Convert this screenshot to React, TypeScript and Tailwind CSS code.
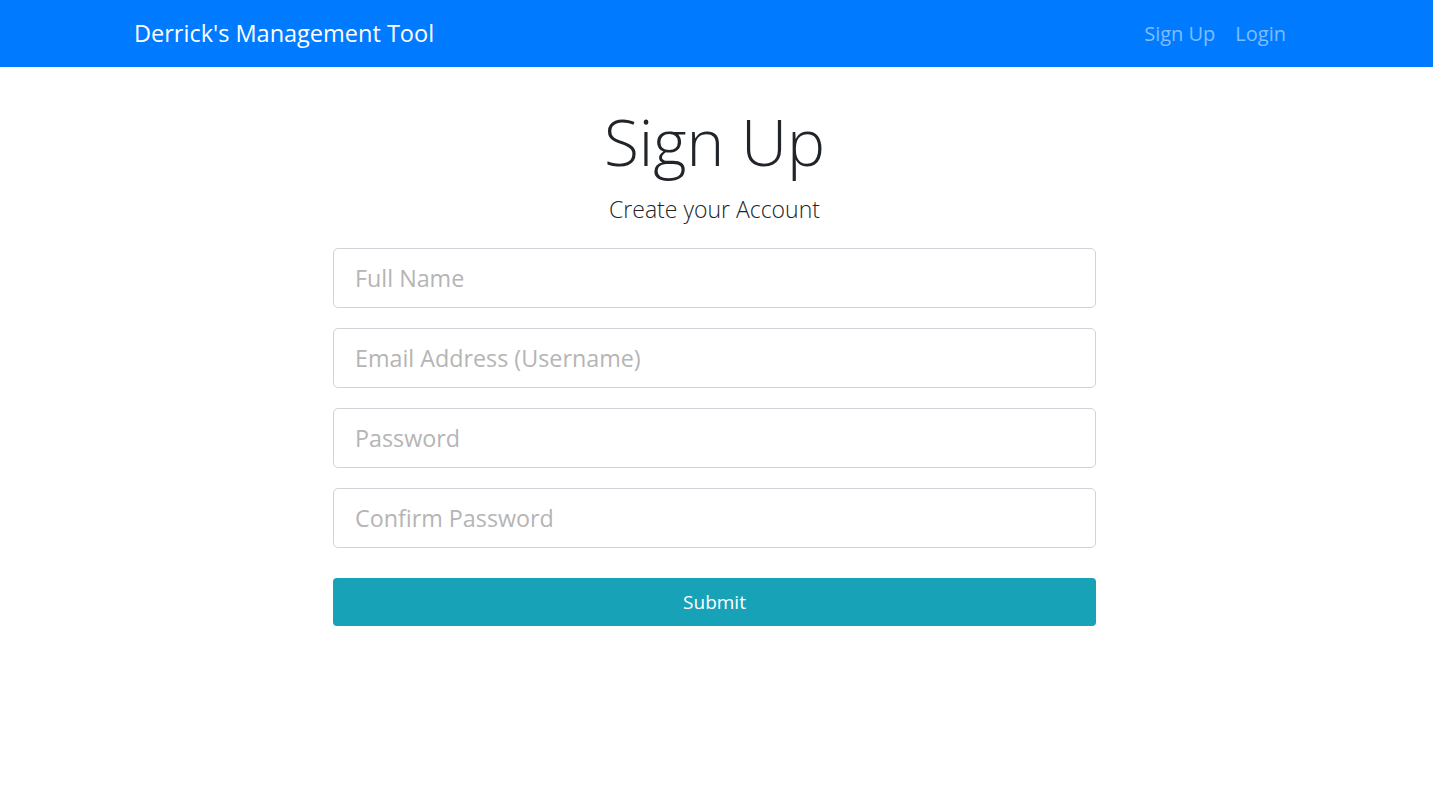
import React from "react";

const fields = [
  { placeholder: "Full Name", type: "text" },
  { placeholder: "Email Address (Username)", type: "email" },
  { placeholder: "Password", type: "password" },
  { placeholder: "Confirm Password", type: "password" },
];

const NavBar = () => (
  <nav className="h-[67px] bg-[#007bff]">
    <div className="mx-auto flex h-full w-[1165px] items-center justify-between">
      <a href="#" className="text-[23.5px] text-white no-underline">
        Derrick's Management Tool
      </a>
      <div className="flex items-center gap-[20px] pr-[13px] text-[20px] text-white/50">
        <a href="#">Sign Up</a>
        <a href="#">Login</a>
      </div>
    </div>
  </nav>
);

export default function App() {
  return (
    <div className="min-h-screen bg-white font-['Open_Sans','Noto_Sans',sans-serif] text-[#212529]">
      <NavBar />
      <div className="flex justify-center pr-[4px]">
        <main className="flex w-[763px] flex-col items-center pt-[35px]">
          <h1 className="text-[64px] leading-[80px] font-light">Sign Up</h1>
          <p className="mt-[11px] text-[23px] leading-[32px] font-light">Create your Account</p>
          <form className="mt-[23px] flex w-full flex-col gap-[20px]">
            {fields.map((f) => (
              <input
                key={f.placeholder}
                type={f.type}
                placeholder={f.placeholder}
                className="h-[60px] w-full rounded-[5px] border border-[#ced4da] px-[21px] text-[23.3px] placeholder:text-[#b5b5b5] focus:outline-none"
              />
            ))}
            <button
              type="button"
              className="mt-[10px] h-[48px] w-full rounded-[4px] bg-[#17a2b8] text-[19px] text-white"
            >
              Submit
            </button>
          </form>
        </main>
      </div>
    </div>
  );
}
